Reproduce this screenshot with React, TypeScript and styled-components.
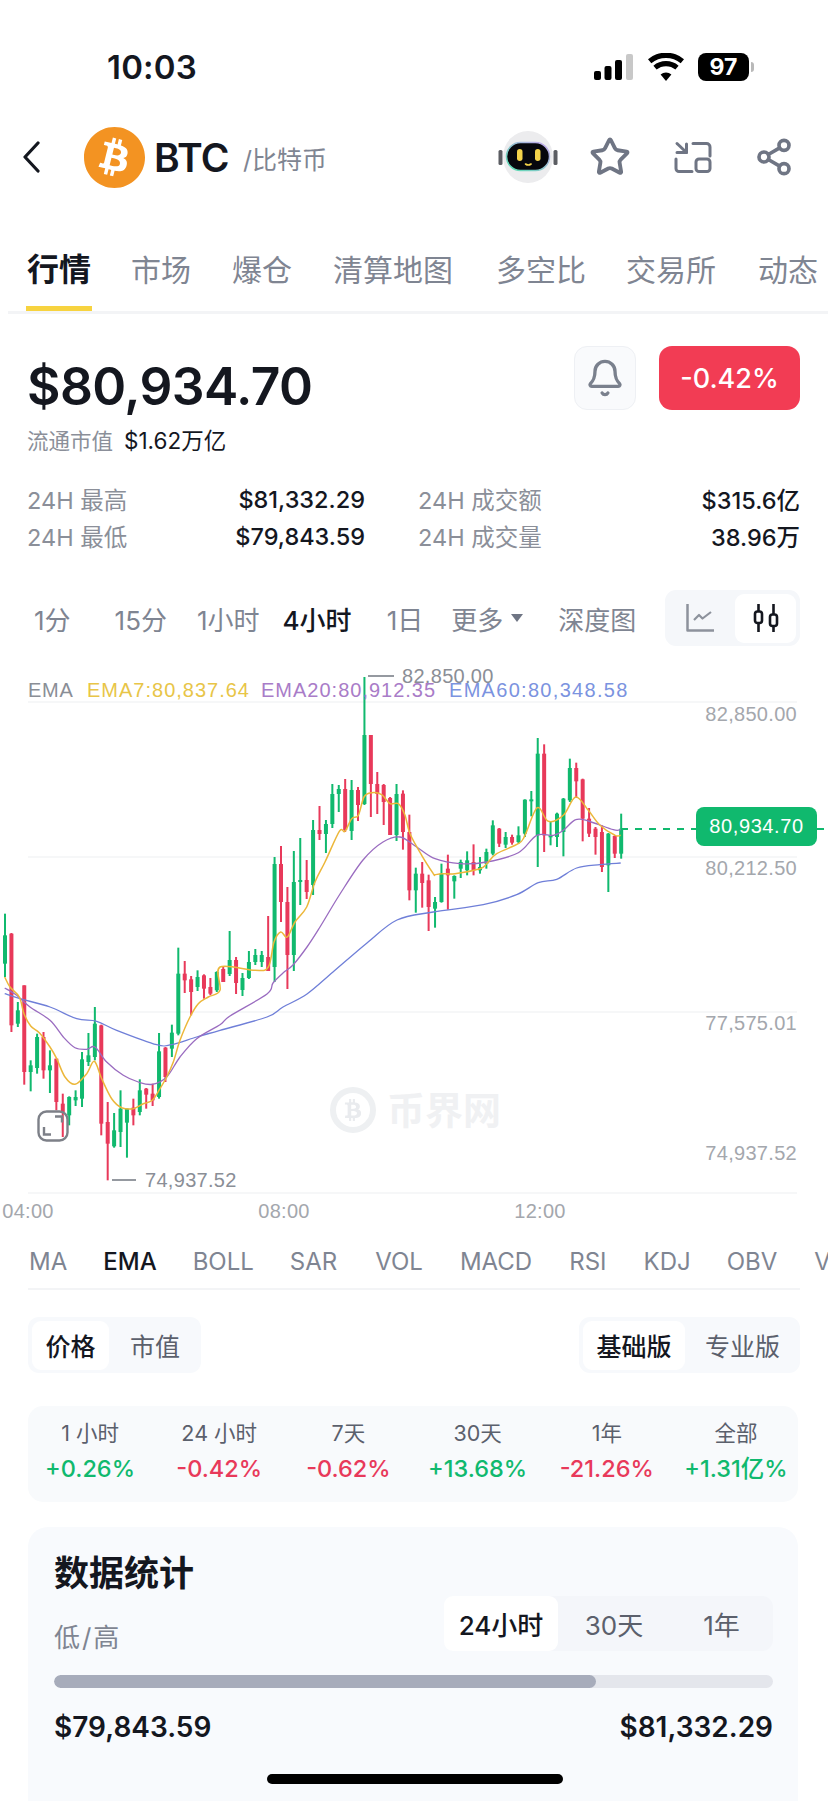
import React from "react";
import styled, { createGlobalStyle } from "styled-components";
import { Star, Share2, Bell } from "lucide-react";
import { FaBitcoin, FaBtc } from "react-icons/fa";

const SANS = `"Inter", "Noto Sans CJK SC", "Noto Sans", sans-serif`;
const CHART = `"Liberation Sans", "Noto Sans CJK SC", sans-serif`;

const Global = createGlobalStyle`
  html, body { margin: 0; padding: 0; background: #fff; }
  body { font-family: ${SANS}; color: #14171f; }
  * { box-sizing: border-box; }
`;

const Page = styled.div`
  position: relative;
  width: 828px;
  height: 1801px;
  overflow: hidden;
  background: #fff;
`;

const StatusBar = styled.div`
  height: 126px;
  display: flex;
  align-items: flex-start;
  justify-content: space-between;
  padding: 48px 79px 0 107px;
`;
const Clock = styled.div`
  font-size: 33px;
  line-height: 38px;
  font-weight: 600;
  letter-spacing: 0.2px;
`;
const StatusIcons = styled.div`
  display: flex;
  align-items: center;
  gap: 14px;
  height: 38px;
`;
const Battery = styled.div`
  position: relative;
  width: 51px;
  height: 28px;
  border-radius: 8px;
  background: #000;
  color: #fff;
  font-size: 23px;
  font-weight: 700;
  line-height: 28px;
  text-align: center;
  &::after {
    content: "";
    position: absolute;
    right: -5px;
    top: 9px;
    width: 3px;
    height: 10px;
    border-radius: 0 3px 3px 0;
    background: #b9b9b9;
  }
`;

const NavBar = styled.div`
  height: 62px;
  display: flex;
  align-items: center;
  padding: 0 34px 0 21px;
`;
const BackButton = styled.div`
  width: 62px;
  display: flex;
  color: #14171f;
`;
const CoinLogo = styled.div`
  width: 63px;
  height: 63px;
  border-radius: 50%;
  background: #fff;
  color: #f39322;
  display: flex;
`;
const Symbol = styled.div`
  margin-left: 8px;
  font-size: 39px;
  font-weight: 600;
  letter-spacing: -0.6px;
`;
const CoinName = styled.div`
  margin-left: 14px;
  font-size: 25px;
  color: #7f8592;
  margin-top: 2px;
`;
const NavActions = styled.div`
  margin-left: auto;
  display: flex;
  align-items: center;
  color: #6f7584;
`;
const NavIcon = styled.div<{ $w: number; $gap?: number }>`
  width: ${(p) => p.$w}px;
  margin-left: ${(p) => p.$gap ?? 0}px;
  display: flex;
  justify-content: center;
`;

const Tabs = styled.div`
  margin-top: 60px;
  margin-left: 8px;
  height: 66px;
  display: flex;
  align-items: flex-start;
  border-bottom: 3px solid #f3f4f6;
  position: relative;
  overflow: hidden;
`;
const Tab = styled.div<{ $active?: boolean; $left: number }>`
  position: relative;
  margin-left: ${(p) => p.$left}px;
  height: 63px;
  white-space: nowrap;
  line-height: 44px;
  font-size: ${(p) => (p.$active ? 32 : 30)}px;
  font-weight: ${(p) => (p.$active ? 600 : 400)};
  color: ${(p) => (p.$active ? "#14171f" : "#7f8592")};
  ${(p) =>
    p.$active &&
    `&::after {
      content: "";
      position: absolute;
      left: -1px;
      right: -1px;
      bottom: 0;
      height: 5px;
      background: #f7d33f;
    }`}
`;

const Summary = styled.div`
  padding: 32px 28px 0 27px;
`;
const PriceRow = styled.div`
  display: flex;
  align-items: flex-start;
`;
const Price = styled.div`
  font-size: 51.5px;
  line-height: 62px;
  font-weight: 600;
  letter-spacing: -0.6px;
  margin-top: 9px;
`;
const BellButton = styled.div`
  margin-left: auto;
  width: 62px;
  height: 64px;
  border-radius: 13px;
  background: #f9fafc;
  border: 1.5px solid #eef0f4;
  color: #7a808d;
  display: flex;
  align-items: center;
  justify-content: center;
`;
const ChangeBadge = styled.div`
  margin-left: 23px;
  width: 141px;
  height: 64px;
  border-radius: 13px;
  background: #f23c54;
  color: #fff;
  font-size: 27px;
  font-weight: 500;
  display: flex;
  align-items: center;
  justify-content: center;
`;
const CapRow = styled.div`
  display: flex;
  align-items: center;
  gap: 11px;
  height: 26px;
  margin-top: 9px;
`;
const CapLabel = styled.span`
  color: #8b8f99;
  font-size: 21.5px;
`;
const CapValue = styled.span`
  color: #14171f;
  font-size: 22.5px;
`;
const StatsGrid = styled.div`
  display: grid;
  grid-template-columns: 338px 382px;
  column-gap: 53px;
  row-gap: 7px;
  margin-top: 32px;
`;
const StatItem = styled.div`
  display: flex;
  justify-content: space-between;
  align-items: center;
  height: 30px;
  font-size: 23.5px;
`;
const StatLabel = styled.span`
  color: #8b8f99;
`;
const StatValue = styled.span`
  color: #14171f;
  font-weight: 500;
`;

const IntervalRow = styled.div`
  margin-top: 39px;
  height: 56px;
  padding: 0 28px 0 0;
  display: flex;
  align-items: center;
  position: relative;
`;
const Interval = styled.div<{ $active?: boolean; $left: number }>`
  margin-left: ${(p) => p.$left}px;
  font-size: 26px;
  white-space: nowrap;
  display: flex;
  align-items: center;
  font-weight: ${(p) => (p.$active ? 500 : 400)};
  color: ${(p) => (p.$active ? "#14171f" : "#7f8592")};
`;
const Caret = styled.span`
  width: 0;
  height: 0;
  margin-left: 8px;
  border-left: 6px solid transparent;
  border-right: 6px solid transparent;
  border-top: 8px solid #6f7584;
`;
const ChartToggle = styled.div`
  margin-left: auto;
  width: 135px;
  height: 56px;
  border-radius: 11px;
  background: #f5f7fa;
  display: flex;
  align-items: center;
  padding: 3px 4px 3px 0;
`;
const ToggleCell = styled.div<{ $active?: boolean }>`
  ${(p) => (p.$active ? "width: 61px;" : "flex: 1;")}
  height: 49px;
  border-radius: 9px;
  display: flex;
  align-items: center;
  justify-content: center;
  background: ${(p) => (p.$active ? "#fff" : "transparent")};
  color: ${(p) => (p.$active ? "#14171f" : "#8d929c")};
`;

const ChartArea = styled.div`
  position: relative;
  height: 572px;
  margin-top: 14px;
`;
const ChartSvg = styled.svg`
  display: block;
  width: 828px;
  height: 572px;
`;
const Legend = styled.div`
  position: absolute;
  left: 28px;
  top: 18px;
  display: flex;
  font-family: ${CHART};
  font-size: 20px;
  line-height: 24px;
  white-space: nowrap;
`;
const LegendItem = styled.span<{ $color: string; $w: number; $ls: number }>`
  color: ${(p) => p.$color};
  width: ${(p) => p.$w}px;
  letter-spacing: ${(p) => p.$ls}px;
`;
const PriceTag = styled.div`
  position: absolute;
  left: 696px;
  top: 147px;
  width: 121px;
  height: 39px;
  border-radius: 8px;
  background: #10b96e;
  color: #fff;
  font-family: ${CHART};
  font-size: 20px;
  letter-spacing: 0.6px;
  display: flex;
  align-items: center;
  justify-content: center;
`;
const ExpandButton = styled.div`
  position: absolute;
  left: 37px;
  top: 450px;
  width: 32px;
  height: 32px;
  display: flex;
`;
const Watermark = styled.div`
  position: absolute;
  left: 330px;
  top: 427px;
  display: flex;
  align-items: center;
  gap: 11px;
  color: #f0f1f3;
  font-size: 38px;
  line-height: 46px;
  font-weight: 700;
`;
const WatermarkRing = styled.div`
  width: 46px;
  height: 46px;
  border-radius: 50%;
  border: 6px solid #eef0f2;
  color: #e9ebee;
  display: flex;
  align-items: center;
  justify-content: center;
  font-size: 22px;
`;

const IndicatorRow = styled.div`
  height: 58px;
  margin-left: 28px;
  margin-right: 28px;
  padding-top: 2px;
  display: flex;
  align-items: center;
  border-bottom: 2px solid #f3f4f6;
  white-space: nowrap;
`;
const Indicator = styled.div<{ $active?: boolean; $left: number }>`
  margin-left: ${(p) => p.$left}px;
  font-size: 24px;
  font-weight: ${(p) => (p.$active ? 500 : 400)};
  color: ${(p) => (p.$active ? "#14171f" : "#7f8592")};
`;
const IndicatorSep = styled.div`
  margin-left: 19px;
  width: 1px;
  height: 26px;
  background: #e2e4e8;
`;

const SegmentRow = styled.div`
  margin: 27px 28px 0 28px;
  display: flex;
  justify-content: space-between;
`;
const Segment = styled.div`
  height: 56px;
  border-radius: 11px;
  background: #f7f9fc;
  display: flex;
  align-items: center;
  padding-left: 4px;
`;
const SegmentCell = styled.div<{ $w: number; $active?: boolean }>`
  width: ${(p) => p.$w}px;
  height: 49px;
  border-radius: 9px;
  display: flex;
  align-items: center;
  justify-content: center;
  font-size: 25px;
  background: ${(p) => (p.$active ? "#fff" : "transparent")};
  color: ${(p) => (p.$active ? "#14171f" : "#5b606c")};
  font-weight: ${(p) => (p.$active ? 500 : 400)};
`;

const Performance = styled.div`
  margin: 33px 30px 0 28px;
  height: 96px;
  border-radius: 15px;
  background: #f8fafc;
  display: grid;
  grid-template-columns: repeat(6, 129.2px);
  justify-content: center;
  align-content: center;
`;
const PerfCell = styled.div`
  display: flex;
  flex-direction: column;
  align-items: center;
  white-space: nowrap;
`;
const PerfLabel = styled.div`
  font-size: 21.5px;
  line-height: 30px;
  color: #5b606c;
`;
const PerfValue = styled.div<{ $up: boolean }>`
  font-size: 23.5px;
  line-height: 42px;
  font-weight: 500;
  color: ${(p) => (p.$up ? "#10b96e" : "#e8395a")};
`;

const StatsCard = styled.div`
  margin: 25px 30px 0 28px;
  height: 295px;
  border-radius: 20px 20px 0 0;
  background: #f8fafd;
  padding: 24px 25px 0 26px;
`;
const CardTitle = styled.div`
  font-size: 35px;
  line-height: 44px;
  font-weight: 700;
`;
const RangeHead = styled.div`
  display: flex;
  justify-content: space-between;
  align-items: flex-end;
  margin-top: 1px;
`;
const RangeLabel = styled.div`
  font-size: 26px;
  line-height: 36px;
  margin-bottom: -5px;
  letter-spacing: 2px;
  color: #7f8592;
`;
const RangeTabs = styled.div`
  width: 329px;
  height: 55px;
  border-radius: 11px;
  background: #f4f6fa;
  display: flex;
`;
const RangeTab = styled.div<{ $w: number; $active?: boolean }>`
  width: ${(p) => p.$w}px;
  border-radius: 9px;
  display: flex;
  align-items: center;
  justify-content: center;
  font-size: 26px;
  background: ${(p) => (p.$active ? "#fff" : "transparent")};
  color: ${(p) => (p.$active ? "#14171f" : "#5b606c")};
  font-weight: ${(p) => (p.$active ? 500 : 400)};
`;
const RangeBar = styled.div`
  margin-top: 24px;
  height: 13px;
  border-radius: 7px;
  background: #e4e6ec;
  overflow: hidden;
`;
const RangeFill = styled.div`
  height: 100%;
  border-radius: 7px;
  background: #a7acbb;
`;
const RangeValues = styled.div`
  margin-top: 20px;
  display: flex;
  justify-content: space-between;
  font-size: 28px;
  line-height: 38px;
  font-weight: 600;
`;
const HomeIndicator = styled.div`
  position: absolute;
  left: 267px;
  top: 1774px;
  width: 296px;
  height: 10px;
  border-radius: 5px;
  background: #000;
`;

const GREEN = "#10b96e";
const RED = "#e8395a";

type C = [number, number, number, number];
const z6 = (a: number, b: number, c: number, d: number): C => [900 + a / 3, 900 + b / 3, 900 + c / 3, 900 + d / 3];
const z8 = (a: number, b: number, c: number, d: number): C => [720 + a / 3, 720 + b / 3, 720 + c / 3, 720 + d / 3];

const raw: [boolean, C][] = [
  [true, z6(35, 225, 100, 185)],
  [false, z6(93, 390, 95, 370)],
  [true, z6(300, 375, 325, 365)],
  [false, z6(250, 548, 250, 510)],
  [true, z6(475, 568, 490, 510)],
  [true, z6(395, 515, 405, 498)],
  [false, z6(390, 530, 405, 505)],
  [true, z6(445, 573, 490, 505)],
  [false, z6(470, 625, 470, 600)],
  [false, z6(575, 705, 605, 630)],
  [true, z6(583, 670, 585, 640)],
  [true, z6(565, 612, 585, 595)],
  [true, z6(450, 615, 472, 590)],
  [true, z6(393, 492, 460, 480)],
  [true, z6(315, 475, 365, 465)],
  [false, z6(368, 700, 370, 665)],
  [false, z6(600, 835, 660, 725)],
  [true, z6(633, 737, 685, 733)],
  [true, z6(565, 735, 620, 690)],
  [true, z6(620, 767, 620, 662)],
  [false, z6(590, 670, 617, 640)],
  [true, z6(532, 640, 565, 630)],
  [false, z6(558, 620, 560, 578)],
  [false, z6(545, 612, 575, 595)],
  [true, z6(393, 590, 448, 585)],
  [false, z6(435, 540, 437, 525)],
  [true, z6(368, 465, 392, 440)],
  [true, z6(137, 400, 215, 395)],
  [false, z6(177, 273, 215, 235)],
  [false, z6(222, 340, 232, 270)],
  [true, z6(205, 267, 225, 255)],
  [false, z6(217, 290, 220, 260)],
  [false, z6(228, 280, 255, 275)],
  [true, z6(208, 270, 210, 265)],
  [false, [964, 980, 967, 980]],
  [true, [929, 974, 958, 972]],
  [false, [955, 992, 958, 981]],
  [true, [971, 994, 976, 988]],
  [true, [949, 977, 960, 976]],
  [true, [947, 963, 953, 960]],
  [true, [949, 965, 953, 960]],
  [false, [914, 969, 955, 969]],
  [true, [855, 980, 862, 965]],
  [false, [844, 920, 862, 900]],
  [false, [885, 987, 900, 953]],
  [true, [849, 969, 880, 953]],
  [true, [836, 903, 878, 880]],
  [false, [858, 897, 878, 890]],
  [true, [818, 893, 828, 883]],
  [false, [804, 838, 828, 832]],
  [true, [818, 851, 822, 832]],
  [true, [782, 826, 792, 822]],
  [true, [783, 810, 787, 792]],
  [false, [777, 830, 787, 828]],
  [true, [778, 838, 788, 829]],
  [false, [785, 819, 788, 803]],
  [true, [675, 803, 733, 802]],
  [false, [733, 815, 733, 782]],
  [false, [770, 812, 782, 792]],
  [false, [782, 823, 783, 800]],
  [false, [795, 833, 796, 833]],
  [true, [782, 839, 792, 833]],
  [false, z8(205, 383, 215, 330)],
  [false, z8(278, 535, 330, 505)],
  [true, z8(437, 572, 455, 505)],
  [false, z8(420, 557, 455, 483)],
  [false, z8(458, 627, 475, 555)],
  [true, z8(525, 617, 540, 560)],
  [true, z8(425, 542, 455, 540)],
  [false, z8(398, 563, 440, 460)],
  [true, z8(460, 530, 462, 478)],
  [true, z8(413, 468, 420, 440)],
  [true, z8(388, 460, 415, 445)],
  [false, z8(367, 460, 420, 445)],
  [true, z8(405, 455, 435, 445)],
  [true, z8(380, 440, 390, 425)],
  [true, z8(295, 400, 310, 395)],
  [false, z8(318, 375, 320, 365)],
  [true, z8(330, 378, 345, 368)],
  [false, z8(338, 368, 345, 362)],
  [true, z8(313, 365, 340, 360)],
  [true, z8(232, 345, 233, 335)],
  [true, z8(207, 283, 232, 237)],
  [true, z8(48, 435, 95, 340)],
  [false, z8(67, 390, 95, 340)],
  [true, z8(300, 370, 340, 346)],
  [true, z8(272, 375, 275, 345)],
  [true, z8(228, 403, 230, 330)],
  [true, z8(110, 240, 138, 235)],
  [false, z8(122, 228, 138, 178)],
  [false, z8(170, 358, 172, 290)],
  [false, z8(258, 345, 290, 335)],
  [false, z8(315, 398, 320, 345)],
  [false, z8(310, 450, 330, 435)],
  [true, z8(333, 510, 335, 430)],
  [false, z8(340, 408, 342, 395)],
  [true, z8(275, 410, 320, 395)],
];

const TOP = 658;
const candles = raw.map(([up, v], i) => ({
  up,
  x: 5 + 6.4185 * i,
  wt: v[0] - TOP,
  wb: v[1] - TOP,
  bt: v[2] - TOP,
  bb: v[3] - TOP,
}));

type P = [number, number];
const pairs = (p: number[], ox: number, oy: number): P[] => {
  const out: P[] = [];
  for (let i = 0; i < p.length; i += 2) out.push([ox + p[i] / 3, oy + p[i + 1] / 3 - TOP]);
  return out;
};
const pz6 = (p: number[]) => pairs(p, 0, 900);
const pz7 = (p: number[]) => pairs(p, 200, 670);
const pz8 = (p: number[]) => pairs(p, 400, 720);
const abs = (p: number[]) => pairs(p.map((v, i) => (i % 2 ? v * 3 : v * 3)), 0, 660);

/* Catmull-Rom through the sampled points, so the averages read as curves */
const smooth = (pts: P[]) => {
  let d = `M${pts[0][0].toFixed(1)} ${pts[0][1].toFixed(1)}`;
  for (let i = 0; i < pts.length - 1; i++) {
    const a = pts[Math.max(i - 1, 0)];
    const b = pts[i];
    const c = pts[i + 1];
    const e = pts[Math.min(i + 2, pts.length - 1)];
    const c1: P = [b[0] + (c[0] - a[0]) / 6, b[1] + (c[1] - a[1]) / 6];
    const c2: P = [c[0] - (e[0] - b[0]) / 6, c[1] - (e[1] - b[1]) / 6];
    d += `C${c1[0].toFixed(1)} ${c1[1].toFixed(1)} ${c2[0].toFixed(1)} ${c2[1].toFixed(1)} ${c[0].toFixed(1)} ${c[1].toFixed(1)}`;
  }
  return d;
};

const ema7 = smooth([
  ...pz6([14,225,30,255,58,285,72,335,92,372,118,392,150,435,170,470,195,525,225,547,260,515,283,478,305,530,335,590,365,617,400,620,430,605,457,595,480,560,500,525,520,480,540,415,570,345,595,305,625,285,660,265]),
  ...pz7([60,885,165,895,205,885,222,810,242,780,262,795,285,750,320,705,345,630,375,570,418,478,435,478,455,440,475,430,492,375,515,362,545,368,570,395,595,395,615,430,630,485,665,550,700,605]),
  ...pz8([105,458,125,455,165,455,240,440,260,425,290,395,355,365,375,340,412,257,445,298,490,280,527,225,565,265,600,310,645,340,662,340]),
]);
const ema20 = smooth([
  ...pz6([14,258,50,280,90,315,150,355,190,405,225,437,260,442,285,435,320,480,370,520,415,540,457,547,500,525,540,465,590,410,660,368]),
  ...abs([230,354,267,332,273,321,283,311,293,303,307,285,320,265,340,232,363,198,383,180,400,175]),
  ...pz8([50,375,105,410,180,425,260,420,355,392,410,340,460,340,490,325,527,293,565,297,640,323,662,323]),
]);
const ema60 = smooth([
  ...pz6([14,275,60,290,150,315,230,350,290,358,350,385,470,428,515,428,590,405,660,385]),
  ...abs([267,355,283,345,307,332,333,310,367,281,397,258]),
  ...pz8([100,570,250,548,350,518,415,482,470,472,530,438,600,428,662,423]),
]);

const Chart = () => (
  <ChartSvg viewBox="0 0 828 572">
    {[42, 197, 352, 533].map((y) => (
      <line key={y} x1="28" x2="797" y1={y} y2={y} stroke="#f3f4f6" strokeWidth="1.5" />
    ))}
    {candles.map((c, i) => {
      const col = c.up ? GREEN : RED;
      return (
        <g key={i} fill={col}>
          <rect x={c.x - 1} y={c.wt} width="2" height={c.wb - c.wt} />
          <rect x={c.x - 2} y={c.bt} width="4" height={Math.max(c.bb - c.bt, 2)} />
        </g>
      );
    })}
    <path d={ema60} fill="none" stroke="#6f7fd8" strokeWidth="1.3" />
    <path d={ema20} fill="none" stroke="#9a6cc0" strokeWidth="1.3" />
    <path d={ema7} fill="none" stroke="#ecb73a" strokeWidth="1.5" />
    <line x1="621" x2="828" y1="169" y2="169" stroke={GREEN} strokeWidth="2" strokeDasharray="7 7" />
    <line x1="368" x2="394" y1="16" y2="16" stroke="#8a8e96" strokeWidth="1.8" />
    <line x1="112" x2="136" y1="520" y2="520" stroke="#8a8e96" strokeWidth="1.8" />
    <g fontFamily={CHART} fontSize="20" letterSpacing="0.3" fill="#8a8e96">
      <text x="402" y="23">82,850.00</text>
      <text x="145" y="527">74,937.52</text>
    </g>
    <g fontFamily={CHART} fontSize="20" letterSpacing="0.3" fill="#a4a7ad" textAnchor="end">
      <text x="797" y="60.5">82,850.00</text>
      <text x="797" y="215">80,212.50</text>
      <text x="797" y="370">77,575.01</text>
      <text x="797" y="500">74,937.52</text>
    </g>
    <g fontFamily={CHART} fontSize="20" letterSpacing="0.3" fill="#a4a7ad" textAnchor="middle">
      <text x="28" y="558">04:00</text>
      <text x="284" y="558">08:00</text>
      <text x="540" y="558">12:00</text>
    </g>
  </ChartSvg>
);

const intervals: [string, number, boolean?][] = [
  ["1分", 34],
  ["15分", 44],
  ["1小时", 30],
  ["4小时", 23, true],
  ["1日", 35],
  ["更多", 28],
];
const indicators: [string, number, boolean?][] = [
  ["MA", 1],
  ["EMA", 36, true],
  ["BOLL", 36],
  ["SAR", 36],
];
const indicators2: [string, number][] = [
  ["VOL", 19],
  ["MACD", 37],
  ["RSI", 37],
  ["KDJ", 37],
  ["OBV", 36],
  ["V", 37],
];
const perf: [string, string, boolean][] = [
  ["1 小时", "+0.26%", true],
  ["24 小时", "-0.42%", false],
  ["7天", "-0.62%", false],
  ["30天", "+13.68%", true],
  ["1年", "-21.26%", false],
  ["全部", "+1.31亿%", true],
];
const tabs: [string, number, boolean?][] = [
  ["行情", 19, true],
  ["市场", 40],
  ["爆仓", 41],
  ["清算地图", 41],
  ["多空比", 43],
  ["交易所", 40],
  ["动态", 42],
];

export default function App() {
  return (
    <Page>
      <Global />
      <StatusBar>
        <Clock>10:03</Clock>
        <StatusIcons>
          <svg width="40" height="26" viewBox="0 0 40 26">
            <rect x="0" y="17" width="7" height="9" rx="2" fill="#000" />
            <rect x="10.5" y="12" width="7" height="14" rx="2" fill="#000" />
            <rect x="21" y="6" width="7" height="20" rx="2" fill="#000" />
            <rect x="32" y="0" width="7" height="26" rx="2" fill="#c8c8c8" />
          </svg>
          <svg width="36" height="28" viewBox="0 0 36 28">
            <path d="M18 28 12.6 21.4a8.4 8.4 0 0 1 10.8 0Z" fill="#000" />
            <path d="M8.6 16.6 5.4 12.7a19.5 19.5 0 0 1 25.2 0l-3.2 3.9a14.6 14.6 0 0 0-18.8 0Z" fill="#000" />
            <path d="M3.3 10.2 0 6.2a28 28 0 0 1 36 0l-3.3 4a23 23 0 0 0-29.4 0Z" fill="#000" />
          </svg>
          <Battery>97</Battery>
        </StatusIcons>
      </StatusBar>

      <NavBar>
        <BackButton>
          <svg width="20" height="32" viewBox="0 0 20 32" fill="none" stroke="currentColor" strokeWidth="3.2" strokeLinecap="round" strokeLinejoin="round">
            <path d="M17 2 4 16l13 14" />
          </svg>
        </BackButton>
        <CoinLogo>
          <FaBitcoin size={63} />
        </CoinLogo>
        <Symbol>BTC</Symbol>
        <CoinName>/比特币</CoinName>
        <NavActions>
          <NavIcon $w={60}>
            <svg width="60" height="52" viewBox="0 0 60 52">
              <defs>
                <linearGradient id="robotGlow" x1="0" y1="1" x2="1" y2="0">
                  <stop offset="0" stopColor="#58e0b0" />
                  <stop offset="1" stopColor="#c9a6f0" />
                </linearGradient>
              </defs>
              <rect x="0.5" y="19" width="4" height="15" rx="1.5" fill="#5b5d62" />
              <rect x="55.5" y="19" width="4" height="15" rx="1.5" fill="#5b5d62" />
              <ellipse cx="30" cy="26" rx="25" ry="26" fill="#ececee" />
              <rect x="8.5" y="11.5" width="43" height="28" rx="14" fill="#07070d" stroke="url(#robotGlow)" strokeWidth="1.5" />
              <rect x="19" y="18" width="5.5" height="12" rx="2.75" fill="#f5d34a" />
              <rect x="37" y="18" width="5.5" height="12" rx="2.75" fill="#f5d34a" />
              <path d="M27.5 33q2.8 2 5.6 0" stroke="#f5d34a" strokeWidth="1.6" fill="none" strokeLinecap="round" />
            </svg>
          </NavIcon>
          <NavIcon $w={42} $gap={31}>
            <Star size={42} strokeWidth={2.2} />
          </NavIcon>
          <NavIcon $w={40} $gap={42}>
            <svg width="38" height="32" viewBox="0 0 38 32" fill="none" stroke="currentColor" strokeWidth="3" strokeLinecap="round" strokeLinejoin="round">
              <path d="M19 2.5h13.5a3.5 3.5 0 0 1 3.5 3.5v9" />
              <path d="M2 18v9.5a3 3 0 0 0 3 3h13" />
              <path d="M3 2.5l9.5 9" />
              <path d="M12.5 3v8.5H3" />
              <rect x="22" y="18" width="14" height="12.5" rx="3" />
            </svg>
          </NavIcon>
          <NavIcon $w={40} $gap={41}>
            <Share2 size={42} strokeWidth={2.2} />
          </NavIcon>
        </NavActions>
      </NavBar>

      <Tabs>
        {tabs.map(([t, l, a]) => (
          <Tab key={t} $left={l} $active={a}>
            {t}
          </Tab>
        ))}
      </Tabs>

      <Summary>
        <PriceRow>
          <Price>$80,934.70</Price>
          <BellButton>
            <Bell size={40} strokeWidth={2} />
          </BellButton>
          <ChangeBadge>-0.42%</ChangeBadge>
        </PriceRow>
        <CapRow>
          <CapLabel>流通市值</CapLabel>
          <CapValue>$1.62万亿</CapValue>
        </CapRow>
        <StatsGrid>
          <StatItem>
            <StatLabel>24H 最高</StatLabel>
            <StatValue>$81,332.29</StatValue>
          </StatItem>
          <StatItem>
            <StatLabel>24H 成交额</StatLabel>
            <StatValue>$315.6亿</StatValue>
          </StatItem>
          <StatItem>
            <StatLabel>24H 最低</StatLabel>
            <StatValue>$79,843.59</StatValue>
          </StatItem>
          <StatItem>
            <StatLabel>24H 成交量</StatLabel>
            <StatValue>38.96万</StatValue>
          </StatItem>
        </StatsGrid>
      </Summary>

      <IntervalRow>
        {intervals.map(([t, l, a]) => (
          <Interval key={t} $left={l} $active={a}>
            {t}
            {t === "更多" && <Caret />}
          </Interval>
        ))}
        <Interval $left={35}>深度图</Interval>
        <ChartToggle>
          <ToggleCell>
            <svg width="28" height="28" viewBox="0 0 28 28" fill="none" stroke="currentColor" strokeWidth="2.5" strokeLinejoin="round">
              <path d="M1.5 0v26.5H28" />
              <path d="M8 16l5-5 3.5 3.5L25 8" strokeWidth="2.2" />
            </svg>
          </ToggleCell>
          <ToggleCell $active>
            <svg width="26" height="30" viewBox="0 0 26 30" fill="none" stroke="currentColor" strokeWidth="2.6">
              <path d="M5.5 1v28M20.5 1v28" />
              <rect x="2" y="8.5" width="7" height="11.5" rx="2.5" fill="#fff" />
              <rect x="17" y="11.5" width="7" height="11.5" rx="2.5" fill="#fff" />
            </svg>
          </ToggleCell>
        </ChartToggle>
      </IntervalRow>

      <ChartArea>
        <Watermark>
          <WatermarkRing>
            <FaBtc />
          </WatermarkRing>
          币界网
        </Watermark>
        <Chart />
        <Legend>
          <LegendItem $color="#8a8e96" $w={59} $ls={0.7}>EMA</LegendItem>
          <LegendItem $color="#e8c547" $w={174} $ls={1}>EMA7:80,837.64</LegendItem>
          <LegendItem $color="#a97cc8" $w={188} $ls={1}>EMA20:80,912.35</LegendItem>
          <LegendItem $color="#7b93e0" $w={190} $ls={1.3}>EMA60:80,348.58</LegendItem>
        </Legend>
        <PriceTag>80,934.70</PriceTag>
        <ExpandButton>
          <svg width="32" height="32" viewBox="0 0 32 32" fill="none" stroke="#7d8088" strokeWidth="2.4">
            <rect x="1.5" y="1.5" width="29" height="29" rx="8" />
            <path d="M18 6.500h7v6" />
            <path d="M7 17v7.500h7" />
          </svg>
        </ExpandButton>
      </ChartArea>

      <IndicatorRow>
        {indicators.map(([t, l, a]) => (
          <Indicator key={t} $left={l} $active={a}>
            {t}
          </Indicator>
        ))}
        <IndicatorSep />
        {indicators2.map(([t, l]) => (
          <Indicator key={t} $left={l}>
            {t}
          </Indicator>
        ))}
      </IndicatorRow>

      <SegmentRow>
        <Segment>
          <SegmentCell $w={77} $active>价格</SegmentCell>
          <SegmentCell $w={92}>市值</SegmentCell>
        </Segment>
        <Segment>
          <SegmentCell $w={102} $active>基础版</SegmentCell>
          <SegmentCell $w={115}>专业版</SegmentCell>
        </Segment>
      </SegmentRow>

      <Performance>
        {perf.map(([l, v, up]) => (
          <PerfCell key={l}>
            <PerfLabel>{l}</PerfLabel>
            <PerfValue $up={up}>{v}</PerfValue>
          </PerfCell>
        ))}
      </Performance>

      <StatsCard>
        <CardTitle>数据统计</CardTitle>
        <RangeHead>
          <RangeLabel>低/高</RangeLabel>
          <RangeTabs>
            <RangeTab $w={114} $active>24小时</RangeTab>
            <RangeTab $w={112}>30天</RangeTab>
            <RangeTab $w={103}>1年</RangeTab>
          </RangeTabs>
        </RangeHead>
        <RangeBar>
          <RangeFill style={{ width: `${(543.6 / 721) * 100}%` }} />
        </RangeBar>
        <RangeValues>
          <span>$79,843.59</span>
          <span>$81,332.29</span>
        </RangeValues>
      </StatsCard>
      <HomeIndicator />
    </Page>
  );
}
